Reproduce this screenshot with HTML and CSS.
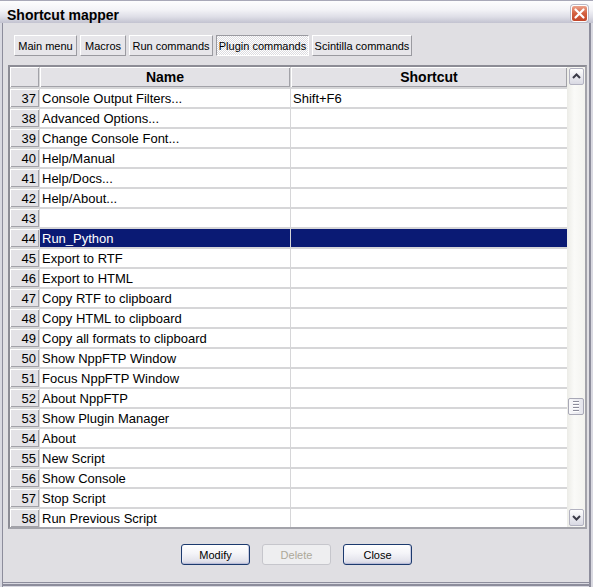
FILE: index.html
```html
<!DOCTYPE html>
<html>
<head>
<meta charset="utf-8">
<title>Shortcut mapper</title>
<link rel="stylesheet" href="styles.css">
</head>
<body>
<div class="window">
  <div class="titlebar">
    <span class="title">Shortcut mapper</span>
    <span class="close">
      <svg width="15" height="15" viewBox="0 0 15 15"><path d="M3.5 3.5 L11.5 11.5 M11.5 3.5 L3.5 11.5" stroke="#fff" stroke-width="2.2" stroke-linecap="round"/></svg>
    </span>
  </div>

  <div class="tabs">
    <div class="tab w-main">Main menu</div>
    <div class="tab w-macros">Macros</div>
    <div class="tab w-run">Run commands</div>
    <div class="tab tab-active w-plugin">Plugin commands</div>
    <div class="tab w-scintilla">Scintilla commands</div>
  </div>

  <div class="grid-frame">
    <div class="table">
      <div class="row head"><div class="num"></div><div class="cell">Name</div><div class="cell">Shortcut</div></div>
      <div class="row"><div class="num">37</div><div class="cell">Console Output Filters...</div><div class="cell">Shift+F6</div></div>
      <div class="row"><div class="num">38</div><div class="cell">Advanced Options...</div><div class="cell"></div></div>
      <div class="row"><div class="num">39</div><div class="cell">Change Console Font...</div><div class="cell"></div></div>
      <div class="row"><div class="num">40</div><div class="cell">Help/Manual</div><div class="cell"></div></div>
      <div class="row"><div class="num">41</div><div class="cell">Help/Docs...</div><div class="cell"></div></div>
      <div class="row"><div class="num">42</div><div class="cell">Help/About...</div><div class="cell"></div></div>
      <div class="row"><div class="num">43</div><div class="cell"></div><div class="cell"></div></div>
      <div class="row sel"><div class="num">44</div><div class="cell">Run_Python</div><div class="cell"></div></div>
      <div class="row"><div class="num">45</div><div class="cell">Export to RTF</div><div class="cell"></div></div>
      <div class="row"><div class="num">46</div><div class="cell">Export to HTML</div><div class="cell"></div></div>
      <div class="row"><div class="num">47</div><div class="cell">Copy RTF to clipboard</div><div class="cell"></div></div>
      <div class="row"><div class="num">48</div><div class="cell">Copy HTML to clipboard</div><div class="cell"></div></div>
      <div class="row"><div class="num">49</div><div class="cell">Copy all formats to clipboard</div><div class="cell"></div></div>
      <div class="row"><div class="num">50</div><div class="cell">Show NppFTP Window</div><div class="cell"></div></div>
      <div class="row"><div class="num">51</div><div class="cell">Focus NppFTP Window</div><div class="cell"></div></div>
      <div class="row"><div class="num">52</div><div class="cell">About NppFTP</div><div class="cell"></div></div>
      <div class="row"><div class="num">53</div><div class="cell">Show Plugin Manager</div><div class="cell"></div></div>
      <div class="row"><div class="num">54</div><div class="cell">About</div><div class="cell"></div></div>
      <div class="row"><div class="num">55</div><div class="cell">New Script</div><div class="cell"></div></div>
      <div class="row"><div class="num">56</div><div class="cell">Show Console</div><div class="cell"></div></div>
      <div class="row"><div class="num">57</div><div class="cell">Stop Script</div><div class="cell"></div></div>
      <div class="row"><div class="num">58</div><div class="cell">Run Previous Script</div><div class="cell"></div></div>
    </div>
    <div class="scrollbar">
      <div class="sb-btn">
        <svg width="13" height="15" viewBox="0 0 13 15"><path d="M3 9 L6.5 5.5 L10 9" fill="none" stroke="#3c3c48" stroke-width="2"/></svg>
      </div>
      <div class="track">
        <div class="thumb">
          <span class="grip"></span><span class="grip"></span><span class="grip"></span><span class="grip"></span>
        </div>
      </div>
      <div class="sb-btn">
        <svg width="13" height="15" viewBox="0 0 13 15"><path d="M3 6 L6.5 9.5 L10 6" fill="none" stroke="#3c3c48" stroke-width="2"/></svg>
      </div>
    </div>
  </div>

  <div class="buttons">
    <div class="btn">Modify</div>
    <div class="btn btn-disabled">Delete</div>
    <div class="btn">Close</div>
  </div>
</div>
</body>
</html>
```

FILE: styles.css
```css
* { box-sizing: border-box; }
html, body { margin: 0; padding: 0; }
body {
  width: 593px;
  height: 587px;
  overflow: hidden;
  background: #e0dfe3;
  font-family: "Liberation Sans", Arial, sans-serif;
  color: #000;
}

.window {
  width: 593px;
  height: 587px;
  background: #e0dfe3;
  display: flex;
  flex-direction: column;
  box-shadow:
    inset 2px 0 0 #d9d9e1, inset 3px 0 0 #8d8d9c,
    inset -2px 0 0 #d9d9e1, inset -4px 0 0 #8d8d9c,
    inset 0 -1px 0 #d9d9e1, inset 0 -3px 0 #8d8d9c,
    inset 0 -4px 0 #d9d9e1, inset 0 -5px 0 #8d8d9c;
}

/* title bar */
.titlebar {
  height: 23px;
  flex: none;
  display: flex;
  align-items: flex-start;
  background: linear-gradient(#fdfdfe 0%, #f3f3f7 40%, #dedee7 72%, #c2c2d0 100%);
  border-top: 1px solid #a8a8b8;
}
.title {
  font-weight: bold;
  font-size: 14px;
  line-height: 16px;
  padding: 6px 0 0 7px;
}
.close {
  margin: 4px 5px 0 auto;
  width: 17px;
  height: 17px;
  border-radius: 3px;
  border: 1px solid #fff;
  box-shadow: 0 0 0 1px #b9b9c6;
  background: linear-gradient(#eba28c, #d3603f 50%, #c2462a);
  display: flex;
  align-items: center;
  justify-content: center;
}

/* tabs */
.tabs {
  display: flex;
  gap: 3px;
  padding: 12px 0 0 14px;
  flex: none;
}
.tab {
  height: 21px;
  font-size: 11px;
  display: flex;
  align-items: center;
  justify-content: center;
  white-space: nowrap;
  background: #e7e6ea;
  border-top: 1px solid #fff;
  border-left: 1px solid #fff;
  border-right: 1px solid #9a9aa0;
  border-bottom: 1px solid #9a9aa0;
}
.tab-active {
  border-top-color: #9a9aa0;
  border-left-color: #9a9aa0;
  border-right-color: #fff;
  border-bottom-color: #fff;
  background: repeating-conic-gradient(#ffffff 0 25%, #dcdbe0 0 50%) 0 0 / 2px 2px;
}
.w-main { width: 63px; }
.w-macros { width: 46px; }
.w-run { width: 84px; }
.w-plugin { width: 93px; }
.w-scintilla { width: 100px; }

/* grid */
.grid-frame {
  margin: 9px 0 0 8px;
  width: 579px;
  height: 464px;
  flex: none;
  display: flex;
  border: 2px solid #a3a3aa;
  border-top-color: #8c8c95;
  border-left-color: #8c8c95;
}
.table {
  width: 557px;
  display: flex;
  flex-direction: column;
  gap: 2px;
  background: #d6d6d8;
}
.row {
  display: grid;
  grid-template-columns: 29px 250px 276px;
  column-gap: 1px;
  height: 18px;
  font-size: 13px;
  line-height: 18px;
}
.row.head { height: 20px; }
.num {
  background: #e3e2e6;
  box-shadow: inset 1px 1px 0 #fff, inset -1px -1px 0 #a2a2a8;
  text-align: right;
  padding: 1px 3px 0 0;
  line-height: 17px;
}
.cell {
  background: #fff;
  padding: 1px 0 0 2px;
  line-height: 17px;
  white-space: nowrap;
  overflow: hidden;
}
.head .cell {
  background: #e3e2e6;
  box-shadow: inset 1px 1px 0 #fff, inset -1px -1px 0 #a2a2a8;
  font-weight: bold;
  font-size: 14px;
  line-height: 20px;
  text-align: center;
  padding: 0;
}
.sel .cell {
  background: #0a1a74;
  color: #fff;
}

/* scrollbar */
.scrollbar {
  width: 18px;
  display: flex;
  flex-direction: column;
  align-items: flex-end;
  background: linear-gradient(to right, #ececE7, #fafaf8 40%, #f3f3ef);
}
.sb-btn {
  width: 15px;
  height: 17px;
  margin: 1px 1px;
  flex: none;
  border: 1px solid #b2b2c0;
  border-radius: 2px;
  background: linear-gradient(#fefefe, #e9e9ef 55%, #d9d9e3);
  display: flex;
  align-items: center;
  justify-content: center;
}
.track {
  flex: 1;
  width: 100%;
  display: flex;
  justify-content: center;
}
.thumb {
  margin-top: 312px;
  width: 16px;
  height: 17px;
  border: 1px solid #a8a8b6;
  border-radius: 2px;
  background: linear-gradient(to right, #f8f8fa, #e4e4ec);
  display: flex;
  flex-direction: column;
  align-items: center;
  justify-content: center;
  gap: 1px;
}
.grip {
  width: 6px;
  height: 1px;
  background: #8c8c9c;
  box-shadow: 0 1px 0 #fff;
  margin-bottom: 1px;
}

/* buttons */
.buttons {
  display: flex;
  justify-content: center;
  gap: 12px;
  margin-top: 15px;
}
.btn {
  width: 69px;
  height: 21px;
  border: 1px solid #1c3a6e;
  border-radius: 3px;
  background: linear-gradient(#ffffff, #f4f4f8 45%, #e2e2eb 85%, #cdcddc);
  box-shadow: inset 0 -1px 0 #b8bcd8, inset 1px 0 0 #eef0fa, inset -1px 0 0 #c8cce2;
  font-size: 11px;
  display: flex;
  align-items: center;
  justify-content: center;
}
.btn-disabled {
  border-color: #c6c6cc;
  background: #eeeef0;
  box-shadow: none;
  color: #aca899;
}
```
